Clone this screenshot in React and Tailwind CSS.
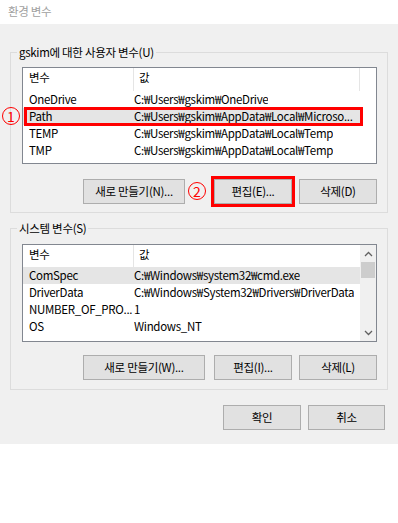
import React from "react";

const FONT = { fontFamily: '"Noto Sans CJK KR", "Noto Sans", sans-serif' };
const T = "text-[11.5px] tracking-[-0.3px]";

function Btn({ children, w, red, circle }) {
  return (
    <div
      className={`relative h-[25px] ${w} bg-[#e1e1e1] border border-[#adadad] flex items-center justify-center ${T} text-black`}
    >
      {children}
      {red && <span className="absolute -inset-[4px] border-[3px] border-[#ff0000]" />}
      {circle && (
        <span className="absolute left-[-27px] top-[2px] w-[18px] h-[18px] rounded-full border border-[#ff0000] text-[#ff0000] text-[14px] tracking-normal leading-none flex items-center justify-center">
          2
        </span>
      )}
    </div>
  );
}

function Row({ name, value, hl, red, circle }) {
  return (
    <div className={`relative h-[17px] flex items-center ${T} text-black ${hl ? "bg-[#e5e5e5]" : ""} w-[337px]`}>
      <div className="flex-none w-[111px] pl-[6px] whitespace-nowrap overflow-hidden">{name}</div>
      <div className="whitespace-nowrap overflow-hidden">{value}</div>
      {red && <span className="absolute left-[1px] right-[-3px] -top-[1px] -bottom-[1px] border-[3px] border-[#ff0000]" />}
      {circle && (
        <span className="absolute left-[-21px] top-[-1px] w-[18px] h-[18px] rounded-full border border-[#ff0000] text-[#ff0000] text-[14px] tracking-normal leading-none flex items-center justify-center">
          1
        </span>
      )}
    </div>
  );
}

function Group({ label, children, mt }) {
  return (
    <div className={`${mt} ml-[10px] w-[378px] border border-[#dcdcdc] pl-[11px] pr-[10px]`}>
      <div className={`-mt-[9px] -ml-[5px] h-[16px] w-fit px-[2px] bg-[#f0f0f0] ${T} leading-[16px] text-black`}>
        {label}
      </div>
      {children}
    </div>
  );
}

export default function App() {
  return (
    <div className="w-[398px] h-[523px] bg-white overflow-hidden" style={FONT}>
      <div className={`h-[24px] pl-[8px] flex items-center ${T} text-[#a0a0a0]`}>환경 변수</div>
      <div className="bg-[#f0f0f0] pt-[28px] pb-[14px]">
        <Group label="gskim에 대한 사용자 변수(U)" mt="">
          <div className="mt-[7px] w-[355px] h-[97px] bg-white border border-[#828790]">
            <div className={`h-[23px] flex ${T} text-black`}>
              <div className="flex-none w-[111px] pl-[6px] pb-[4px] flex items-center border-r border-[#e5e5e5]">변수</div>
              <div className="flex-none w-[226px] pl-[5px] pb-[4px] flex items-center border-r border-[#e5e5e5]">값</div>
            </div>
            <Row name="OneDrive" value="C:₩Users₩gskim₩OneDrive" />
            <Row name="Path" value="C:₩Users₩gskim₩AppData₩Local₩Microso..." hl red circle />
            <Row name="TEMP" value="C:₩Users₩gskim₩AppData₩Local₩Temp" />
            <Row name="TMP" value="C:₩Users₩gskim₩AppData₩Local₩Temp" />
          </div>
          <div className="mt-[15px] pb-[8px] flex justify-end gap-[7px]">
            <div className="mr-[22px]">
              <Btn w="w-[102px]">새로 만들기(N)...</Btn>
            </div>
            <Btn w="w-[78px]" red circle>편집(E)...</Btn>
            <Btn w="w-[78px]">삭제(D)</Btn>
          </div>
        </Group>
        <Group label="시스템 변수(S)" mt="mt-[15px]">
          <div className="mt-[8px] w-[355px] h-[98px] bg-white border border-[#828790] flex overflow-hidden">
            <div className="flex-1">
              <div className={`h-[22px] flex ${T} text-black`}>
                <div className="flex-none w-[111px] pl-[6px] pb-[3px] flex items-center border-r border-[#e5e5e5]">변수</div>
                <div className="pl-[5px] pb-[3px] flex items-center">값</div>
              </div>
              <Row name="ComSpec" value="C:₩Windows₩system32₩cmd.exe" hl />
              <Row name="DriverData" value="C:₩Windows₩System32₩Drivers₩DriverData" />
              <Row name="NUMBER_OF_PRO..." value="1" />
              <Row name="OS" value="Windows_NT" />
            </div>
            <div className="flex-none w-[16px] bg-[#f0f0f0] flex flex-col items-center">
              <div className="h-[17px] flex items-center justify-center">
                <svg width="9" height="6" viewBox="0 0 9 6"><path d="M1 5 L4.5 1.5 L8 5" stroke="#606060" strokeWidth="1.3" fill="none" /></svg>
              </div>
              <div className="w-[14px] h-[16px] bg-[#cdcdcd]" />
              <div className="flex-1" />
              <div className="h-[17px] flex items-center justify-center">
                <svg width="9" height="6" viewBox="0 0 9 6"><path d="M1 1 L4.5 4.5 L8 1" stroke="#606060" strokeWidth="1.3" fill="none" /></svg>
              </div>
            </div>
          </div>
          <div className="mt-[13px] pb-[9px] flex justify-end gap-[7px]">
            <div className="mr-[2px]">
              <Btn w="w-[122px]">새로 만들기(W)...</Btn>
            </div>
            <Btn w="w-[78px]">편집(I)...</Btn>
            <Btn w="w-[78px]">삭제(L)</Btn>
          </div>
        </Group>
        <div className="mt-[15px] pr-[13px] flex justify-end gap-[7px]">
          <Btn w="w-[78px]">확인</Btn>
          <Btn w="w-[77px]">취소</Btn>
        </div>
      </div>
    </div>
  );
}
